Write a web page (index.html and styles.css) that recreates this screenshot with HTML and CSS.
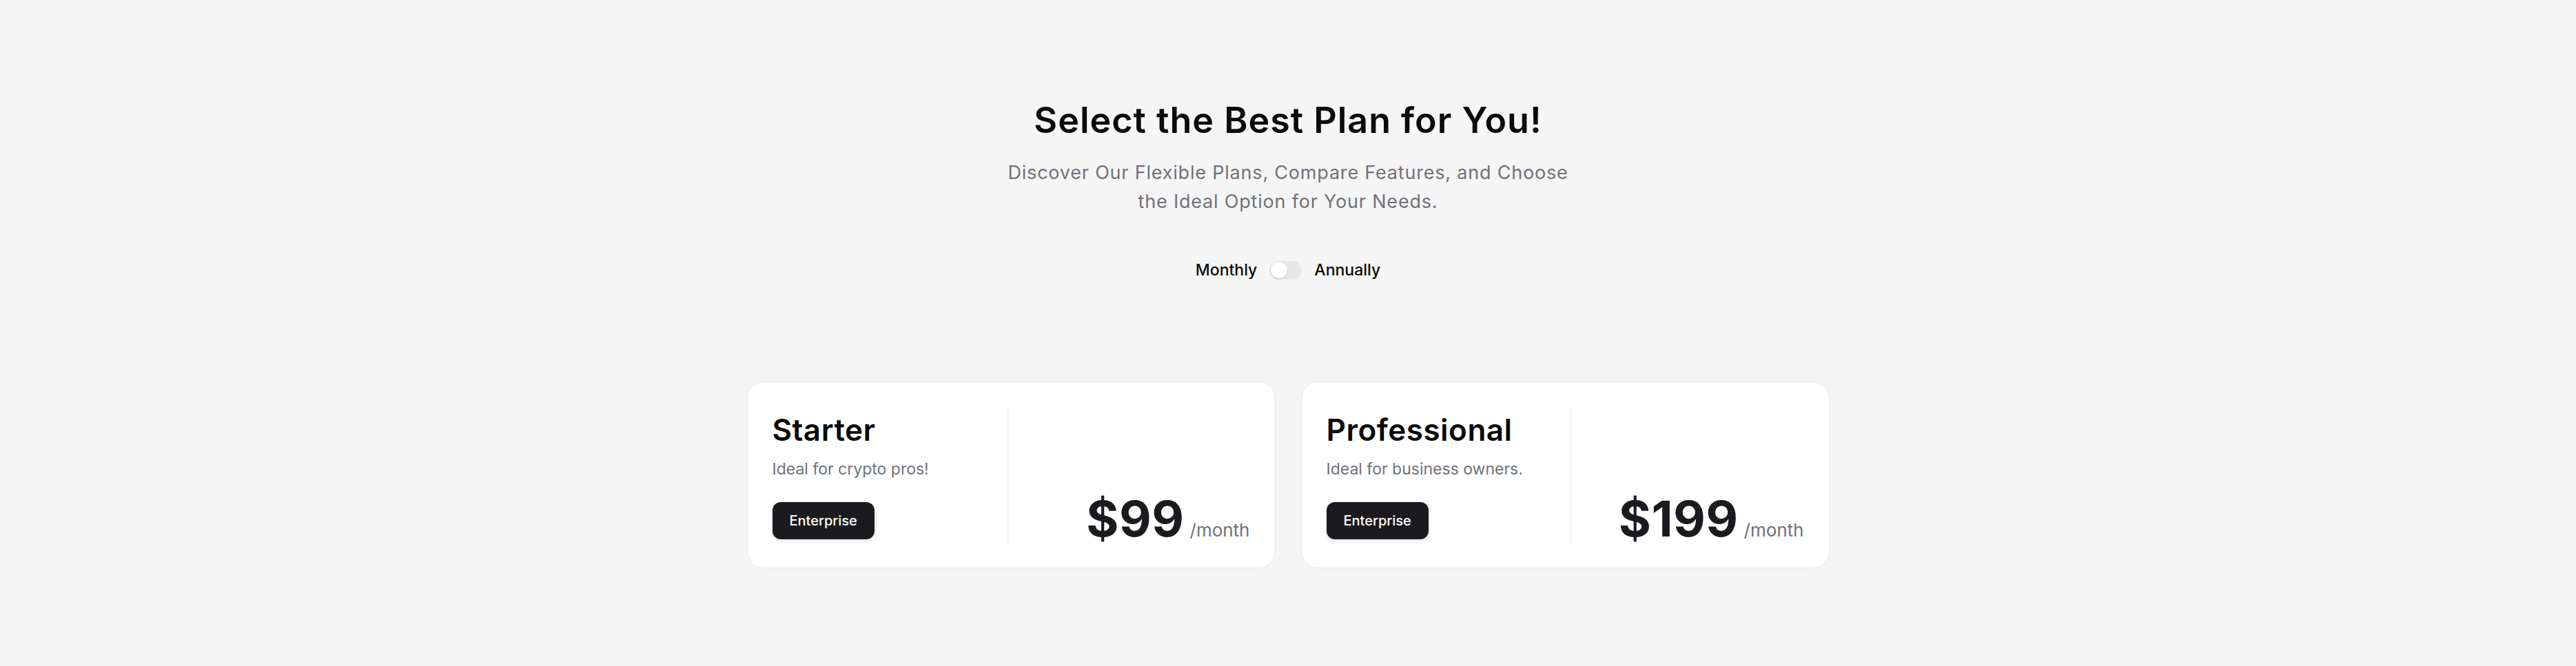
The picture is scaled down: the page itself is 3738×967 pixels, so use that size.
FILE: index.html
```html
<!DOCTYPE html>
<html lang="en">
<head>
<meta charset="utf-8">
<title>Pricing</title>
<link rel="stylesheet" href="styles.css">
</head>
<body>
<section class="pricing">
  <header class="intro">
    <h1 class="title">Select the Best Plan for You!</h1>
    <p class="lead">Discover Our Flexible Plans, Compare Features, and Choose the Ideal Option for Your Needs.</p>
  </header>
  <div class="billing">
    <span class="billing-label">Monthly</span>
    <span class="switch"><span class="knob"></span></span>
    <span class="billing-label">Annually</span>
  </div>
  <div class="plans">
    <article class="plan">
      <div class="plan-info">
        <h2 class="plan-name">Starter</h2>
        <p class="plan-desc">Ideal for crypto pros!</p>
        <button class="plan-btn">Enterprise</button>
      </div>
      <div class="plan-price">
        <div class="price-line"><span class="amount">$99</span><span class="per">/month</span></div>
      </div>
    </article>
    <article class="plan">
      <div class="plan-info">
        <h2 class="plan-name">Professional</h2>
        <p class="plan-desc">Ideal for business owners.</p>
        <button class="plan-btn">Enterprise</button>
      </div>
      <div class="plan-price">
        <div class="price-line"><span class="amount">$199</span><span class="per">/month</span></div>
      </div>
    </article>
  </div>
</section>
</body>
</html>
```

FILE: styles.css
```css
* { box-sizing: border-box; }
html, body { margin: 0; padding: 0; }
body {
  background: #f5f5f5;
  font-family: Inter, "Noto Sans", "Liberation Sans", sans-serif;
  color: #0a0a0a;
}
.pricing {
  padding: 144px 0 144px;
  display: flex;
  flex-direction: column;
  align-items: center;
}
.intro {
  display: flex;
  flex-direction: column;
  align-items: center;
  text-align: center;
}
.title {
  margin: 0;
  font-size: 52px;
  line-height: 1.2;
  font-weight: 600;
  letter-spacing: 1px;
  color: #0a0a0a;
}
.lead {
  margin: 24px 0 0;
  max-width: 845px;
  font-size: 27px;
  line-height: 42px;
  letter-spacing: 0.8px;
  color: #71717a;
}
.billing {
  margin-top: 60px;
  display: flex;
  align-items: center;
  gap: 18px;
  height: 36px;
}
.billing-label {
  font-size: 23px;
  font-weight: 500;
  line-height: 36px;
  color: #0a0a0a;
}
.switch {
  display: flex;
  align-items: center;
  width: 47px;
  height: 27px;
  padding: 0 2px;
  border-radius: 999px;
  background: #e7e7ea;
}
.knob {
  width: 24px;
  height: 24px;
  border-radius: 50%;
  background: #fff;
  box-shadow: 0 1px 3px rgba(0,0,0,0.15);
}
.plans {
  margin-top: 144px;
  width: 1571px;
  display: grid;
  grid-template-columns: 1fr 1fr;
  gap: 37px;
}
.plan {
  display: flex;
  background: #fff;
  border: 1px solid #e6e6e8;
  border-radius: 24px;
  padding: 36px 36px 35px;
}
.plan-info {
  flex: 1 1 auto;
  display: flex;
  flex-direction: column;
  align-items: flex-start;
  padding-bottom: 6px;
}
.plan-name {
  margin: 0;
  font-size: 44px;
  line-height: 66px;
  font-weight: 600;
  letter-spacing: 0.5px;
  color: #0a0a0a;
}
.plan-desc {
  margin: 6px 0 0;
  font-size: 23px;
  line-height: 36px;
  color: #71717a;
}
.plan-btn {
  margin-top: 30px;
  height: 54px;
  padding: 0 25px;
  border: none;
  border-radius: 12px;
  background: #1b1b1f;
  color: #fff;
  font-family: inherit;
  font-size: 20px;
  font-weight: 500;
  box-shadow: 0 2px 6px rgba(0,0,0,0.12);
}
.plan-price {
  flex: 1 1 auto;
  display: flex;
  align-items: flex-end;
  justify-content: flex-end;
  border-left: 1px solid #e4e4e7;
}
.price-line {
  display: flex;
  align-items: baseline;
  gap: 8px;
}
.amount {
  font-size: 72px;
  line-height: 72px;
  font-weight: 700;
  letter-spacing: 0.5px;
  color: #1b1b1f;
}
.per {
  font-size: 26px;
  color: #71717a;
}
```
